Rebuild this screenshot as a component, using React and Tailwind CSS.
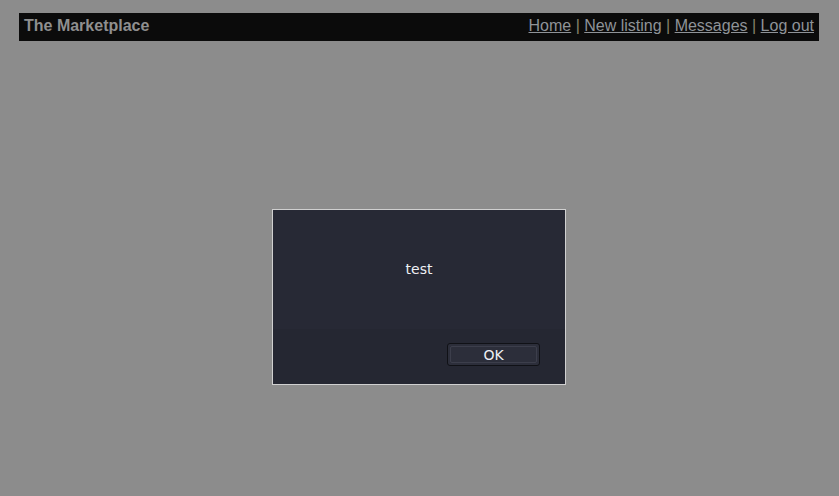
import React from 'react';

const links = ['Home', 'New listing', 'Messages', 'Log out'];

const App = () => {
  return (
    <div className="min-h-screen bg-[#8c8c8c] pt-[13px] pl-[19px] pr-[20px] font-['Liberation_Sans',Arial,sans-serif]">
      <div className="flex items-center justify-between h-[28px] pb-[2px] bg-[#0b0b0b] px-[5px] text-[16px] text-[#8f8f8f]">
        <span className="font-bold">The Marketplace</span>
        <nav className="whitespace-pre">
          {links.map((label, i) => (
            <React.Fragment key={label}>
              {i > 0 && <span className="text-[#86826c]">{' | '}</span>}
              <a href="#" className="underline text-[#8f9398]">
                {label}
              </a>
            </React.Fragment>
          ))}
        </nav>
      </div>

      <div className="mx-auto mt-[168px] w-[294px] border border-[#d0d0d0] bg-[#272935] font-['DejaVu_Sans',sans-serif] text-[14px] text-[#eef0f4]">
        <div className="h-[119px] pt-[51px] text-center leading-[17px]">test</div>
        <div className="flex justify-end bg-[#252732] h-[55px] pt-[14px] pr-[25px]">
          <button className="h-[23px] w-[93px] rounded-[3px] border border-[#101116] bg-[#2c2e3a] p-[2px]">
            <span className="flex h-full w-full items-center justify-center rounded-[2px] border border-[#3c3e4b] leading-none">
              OK
            </span>
          </button>
        </div>
      </div>
    </div>
  );
};

export default App;
